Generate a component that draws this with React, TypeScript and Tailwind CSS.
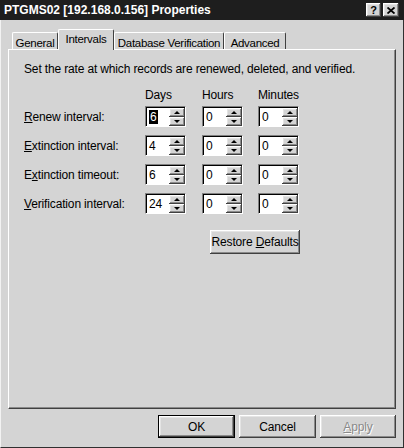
/**
 * Server properties dialog — Intervals tab (classic Windows look).
 */

const raised =
  "shadow-[inset_-1px_-1px_0_#404040,inset_1px_1px_0_#ffffff,inset_-2px_-2px_0_#8a8a8a,inset_2px_2px_0_#e4e4e4]";

function Arrow({ up }: { up?: boolean }) {
  return up ? (
    <span className="w-0 h-0 border-l-[3px] border-r-[3px] border-b-[3px] border-l-transparent border-r-transparent border-b-black" />
  ) : (
    <span className="w-0 h-0 border-l-[3px] border-r-[3px] border-t-[3px] border-l-transparent border-r-transparent border-t-black" />
  );
}

function Spin({ value, selected }: { value: string; selected?: boolean }) {
  return (
    <div className="flex w-[41px] h-[21px] border-t border-l border-t-[#808080] border-l-[#808080] border-b border-r border-b-white border-r-white">
      <div className="flex-1 flex bg-white border-t border-l border-black">
        <div className="flex-1 flex items-center pl-[2px] leading-none">
          {selected ? <span className="bg-black text-white px-px py-px">{value}</span> : value}
        </div>
        <div className="w-[16px] flex flex-col">
          <div className={`flex-1 flex items-center justify-center bg-[#d4d4d4] ${raised}`}>
            <Arrow up />
          </div>
          <div className={`flex-1 flex items-center justify-center bg-[#d4d4d4] ${raised}`}>
            <Arrow />
          </div>
        </div>
      </div>
    </div>
  );
}

function Row({ label, values, top, sel }: { label: React.ReactNode; values: string[]; top: string; sel?: boolean }) {
  return (
    <div className={`grid grid-cols-[121px_57px_56px_41px] items-center ${top}`}>
      <span className="whitespace-nowrap">{label}</span>
      <Spin value={values[0]} selected={sel} />
      <Spin value={values[1]} />
      <Spin value={values[2]} />
    </div>
  );
}

const tabs = [
  { name: "General", w: "w-[46px]" },
  { name: "Intervals", w: "w-[56px]", active: true },
  { name: "Database Verification", w: "w-[110px]" },
  { name: "Advanced", w: "w-[62px]" },
];

export default function App() {
  return (
    <div className="w-[404px] h-[448px] flex flex-col bg-[#d4d4d4] text-black font-['Liberation_Sans',Arial,sans-serif] text-[12px] tracking-[-0.15px]">
      {/* Title bar */}
      <div className="h-[20px] flex items-center justify-between bg-[#1e1e1e] pl-[4px] pr-[5px]">
        <span className="text-white font-bold text-[12px] tracking-normal whitespace-nowrap">PTGMS02 [192.168.0.156] Properties</span>
        <div className="flex gap-[2px]">
          <div className={`w-[15px] h-[14px] bg-[#d4d4d4] flex items-center justify-center font-bold text-[11px] leading-none ${raised}`}>?</div>
          <div className={`w-[16px] h-[14px] bg-[#d4d4d4] flex items-center justify-center ${raised}`}>
            <svg width="8" height="7" viewBox="0 0 8 7">
              <path d="M0.5 0.5 L7.5 6.5 M7.5 0.5 L0.5 6.5" stroke="#000" strokeWidth="1.8" />
            </svg>
          </div>
        </div>
      </div>

      {/* Body */}
      <div className="flex-1 flex flex-col border-l border-l-[#f2f2f2] border-r border-r-[#303030] border-b border-b-[#303030]">
        {/* Tabs */}
        <div className="flex items-end h-[29px] pl-[11px] text-[11.5px] tracking-[-0.3px]">
          {tabs.map((t) => (
            <div
              key={t.name}
              className={`${t.w} flex justify-center whitespace-nowrap border-t border-l border-t-white border-l-white border-r border-r-[#404040] rounded-t-[2px] ${
                t.active ? "h-[21px] pt-[1px] relative z-10 -mb-px bg-[#d4d4d4]" : "h-[17px] pt-[2px]"
              }`}
            >
              {t.name}
            </div>
          ))}
        </div>

        {/* Panel */}
        <div className="ml-[7px] mr-[7px] h-[360px] border-t border-l border-t-white border-l-white border-r border-b border-r-[#404040] border-b-[#404040] shadow-[inset_-1px_-1px_0_#8a8a8a] pl-[15px] pt-[12px]">
          <p className="leading-[14px] whitespace-nowrap">Set the rate at which records are renewed, deleted, and verified.</p>

          <div className="grid grid-cols-[121px_57px_56px_41px] mt-[12px] leading-[14px]">
            <span />
            <span>Days</span>
            <span>Hours</span>
            <span>Minutes</span>
          </div>

          <Row top="mt-[4px]" sel label={<><span className="underline">R</span>enew interval:</>} values={["6", "0", "0"]} />
          <Row top="mt-[8px]" label={<><span className="underline">E</span>xtinction interval:</>} values={["4", "0", "0"]} />
          <Row top="mt-[8px]" label={<>E<span className="underline">x</span>tinction timeout:</>} values={["6", "0", "0"]} />
          <Row top="mt-[8px]" label={<><span className="underline">V</span>erification interval:</>} values={["24", "0", "0"]} />

          <div className="w-[276px] flex justify-end mt-[16px]">
            <button className={`w-[90px] h-[24px] bg-[#d4d4d4] whitespace-nowrap ${raised}`}>
              Restore <span className="underline">D</span>efaults
            </button>
          </div>
        </div>

        {/* Footer buttons */}
        <div className="flex justify-end gap-[4px] mt-[6px] pr-[7px]">
          <button className={`w-[77px] h-[23px] bg-[#d4d4d4] border border-black ${raised}`}>OK</button>
          <button className={`w-[77px] h-[23px] bg-[#d4d4d4] ${raised}`}>Cancel</button>
          <button className={`w-[76px] h-[23px] bg-[#d4d4d4] text-[#8a8a8a] [text-shadow:1px_1px_0_#ffffff] ${raised}`}>
            <span className="underline">A</span>pply
          </button>
        </div>
      </div>
    </div>
  );
}
